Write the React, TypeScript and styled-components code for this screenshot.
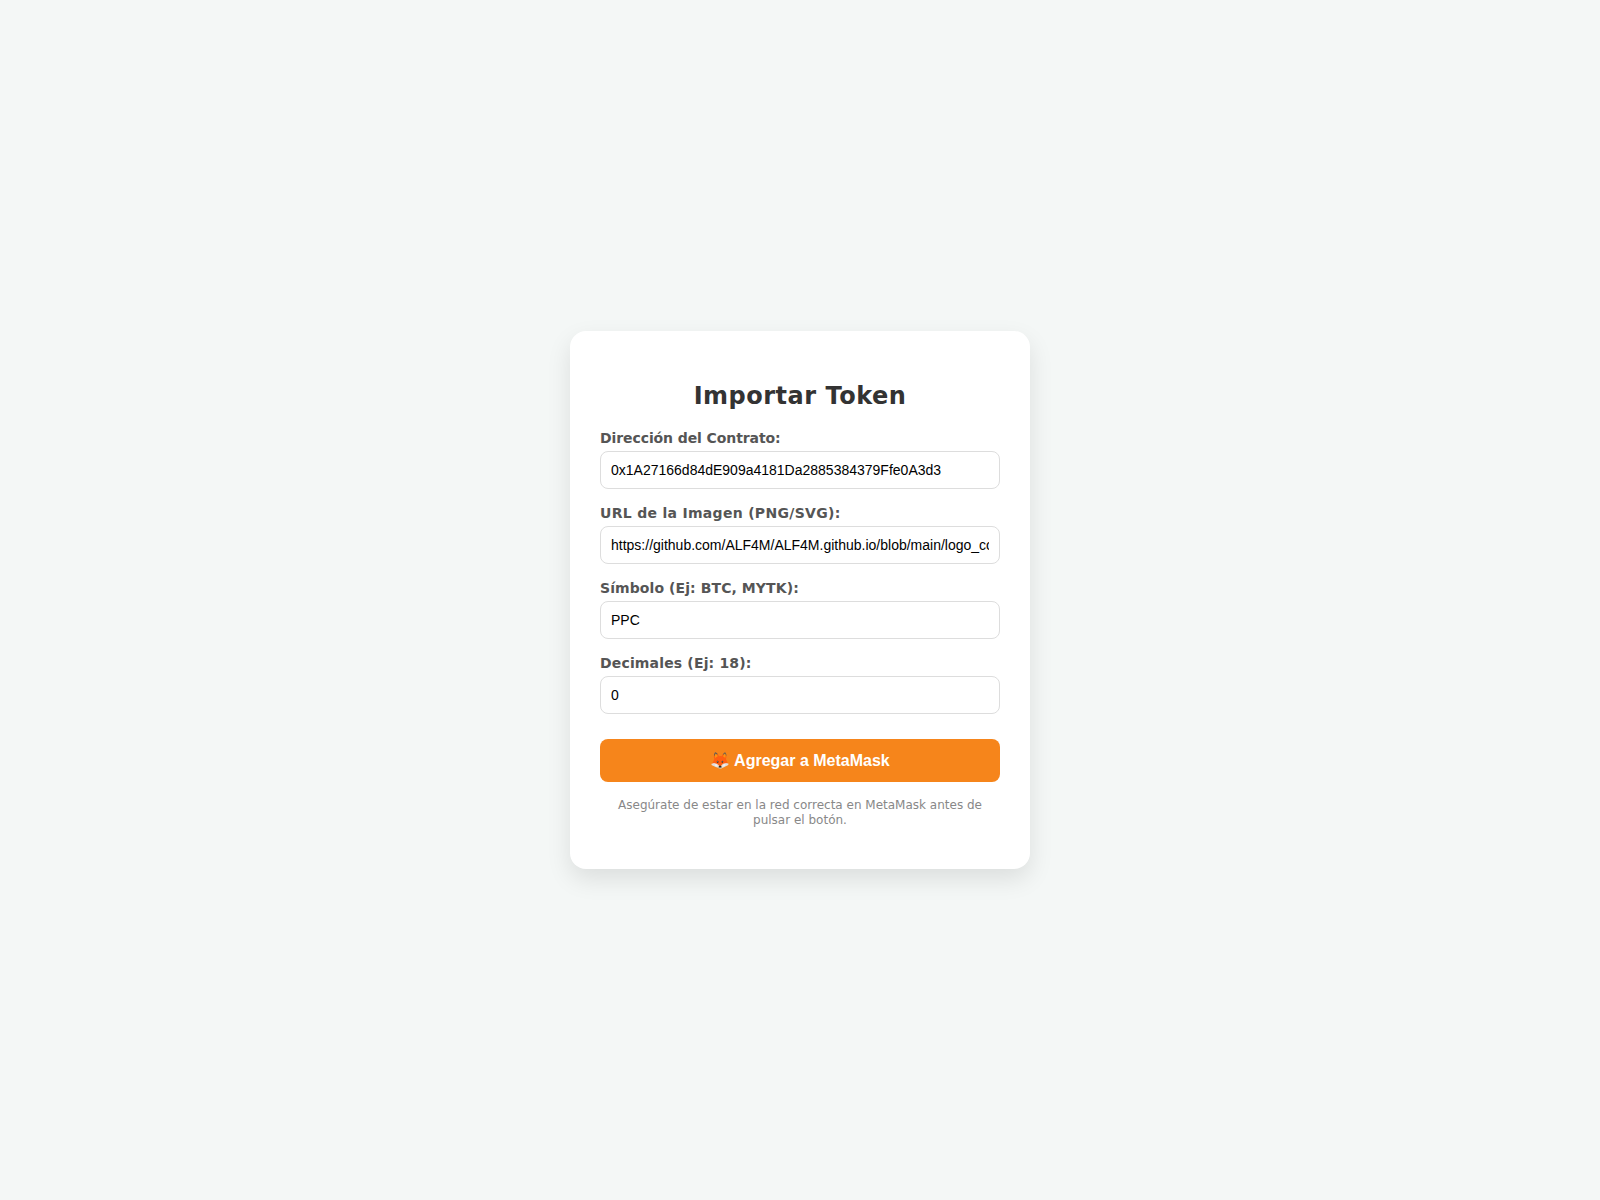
import styled, { createGlobalStyle } from 'styled-components';

const GlobalStyle = createGlobalStyle`
  html, body, #root {
    height: 100%;
  }

  body {
    margin: 0;
    background: #f4f7f6;
    font-family: 'DejaVu Sans', Verdana, sans-serif;
  }
`;

const fields = [
  { id: 'address', label: 'Dirección del Contrato:', value: '0x1A27166d84dE909a4181Da2885384379Ffe0A3d3', tracking: -0.09 },
  { id: 'image', label: 'URL de la Imagen (PNG/SVG):', value: 'https://github.com/ALF4M/ALF4M.github.io/blob/main/logo_color.png', tracking: 0.3 },
  { id: 'symbol', label: 'Símbolo (Ej: BTC, MYTK):', value: 'PPC', tracking: 0.085 },
  { id: 'decimals', label: 'Decimales (Ej: 18):', value: '0', tracking: 0.16 },
];

export default function App() {
  return (
    <>
      <GlobalStyle />
      <Page>
        <Card>
          <Title>Importar Token</Title>
          {fields.map((field) => (
            <Field key={field.id}>
              <Label htmlFor={field.id} $tracking={field.tracking}>
                {field.label}
              </Label>
              <Input id={field.id} type="text" defaultValue={field.value} />
            </Field>
          ))}
          <SubmitButton type="button">🦊 Agregar a MetaMask</SubmitButton>
          <Note>Asegúrate de estar en la red correcta en MetaMask antes de pulsar el botón.</Note>
        </Card>
      </Page>
    </>
  );
}

const Page = styled.main`
  display: flex;
  align-items: center;
  justify-content: center;
  min-height: 100vh;
`;

const Card = styled.section`
  box-sizing: border-box;
  width: 460px;
  padding: 30px;
  background: #fff;
  border-radius: 16px;
  box-shadow: 0 10px 25px rgba(0, 0, 0, 0.1);
`;

const Title = styled.h2`
  margin: 21px 0 19px;
  color: #333;
  font-size: 24px;
  font-weight: 700;
  line-height: 29px;
  letter-spacing: 0.5px;
  text-align: center;
`;

const Field = styled.div`
  display: flex;
  flex-direction: column;
  margin-bottom: 16px;
`;

const Label = styled.label<{ $tracking: number }>`
  margin-bottom: 4px;
  color: #555;
  font-size: 14px;
  font-weight: 700;
  line-height: 17px;
  letter-spacing: ${(props) => props.$tracking}px;
`;

const Input = styled.input`
  box-sizing: border-box;
  width: 100%;
  padding: 10px;
  border: 1px solid #ddd;
  border-radius: 8px;
  color: #000;
  font-family: 'Liberation Sans', Arial, sans-serif;
  font-size: 14px;
`;

const SubmitButton = styled.button`
  display: block;
  width: 100%;
  margin-top: 25px;
  padding: 12px;
  border: none;
  border-radius: 8px;
  background: #f6851b;
  color: #fff;
  font-family: 'Liberation Sans', Arial, sans-serif;
  font-size: 16px;
  font-weight: 700;
`;

const Note = styled.p`
  margin: 16px 0 11px;
  color: #888;
  font-size: 12px;
  line-height: 15px;
  text-align: center;
`;
